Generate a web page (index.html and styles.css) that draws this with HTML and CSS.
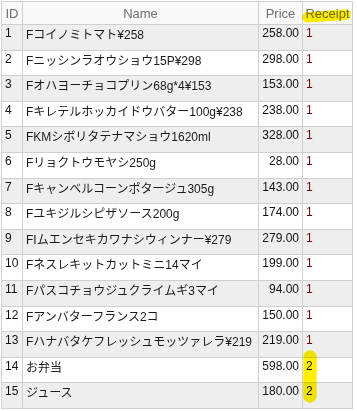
FILE: index.html
```html
<!DOCTYPE html>
<html lang="ja">
<head>
<meta charset="utf-8">
<title>Receipt items</title>
<link rel="stylesheet" href="styles.css">
</head>
<body>
<div class="wrap">
<table class="grid">
  <colgroup>
    <col class="c-id"><col class="c-name"><col class="c-price"><col class="c-rcpt">
  </colgroup>
  <thead>
    <tr><th>ID</th><th>Name</th><th>Price</th><th>Receipt</th></tr>
  </thead>
  <tbody>
    <tr><td class="id">1</td><td class="name">Fコイノミトマト¥258</td><td class="price">258.00</td><td class="rc">1</td></tr>
    <tr><td class="id">2</td><td class="name">Fニッシンラオウショウ15P¥298</td><td class="price">298.00</td><td class="rc">1</td></tr>
    <tr><td class="id">3</td><td class="name">Fオハヨーチョコプリン68g*4¥153</td><td class="price">153.00</td><td class="rc">1</td></tr>
    <tr><td class="id">4</td><td class="name">Fキレテルホッカイドウバター100g¥238</td><td class="price">238.00</td><td class="rc">1</td></tr>
    <tr><td class="id">5</td><td class="name">FKMシボリタテナマショウ1620ml</td><td class="price">328.00</td><td class="rc">1</td></tr>
    <tr><td class="id">6</td><td class="name">Fリョクトウモヤシ250g</td><td class="price">28.00</td><td class="rc">1</td></tr>
    <tr><td class="id">7</td><td class="name">Fキャンベルコーンポタージュ305g</td><td class="price">143.00</td><td class="rc">1</td></tr>
    <tr><td class="id">8</td><td class="name">Fユキジルシピザソース200g</td><td class="price">174.00</td><td class="rc">1</td></tr>
    <tr><td class="id">9</td><td class="name">FIムエンセキカワナシウィンナー¥279</td><td class="price">279.00</td><td class="rc">1</td></tr>
    <tr><td class="id">10</td><td class="name">Fネスレキットカットミニ14マイ</td><td class="price">199.00</td><td class="rc">1</td></tr>
    <tr><td class="id">11</td><td class="name">Fパスコチョウジュクライムギ3マイ</td><td class="price">94.00</td><td class="rc">1</td></tr>
    <tr><td class="id">12</td><td class="name">Fアンバターフランス2コ</td><td class="price">150.00</td><td class="rc">1</td></tr>
    <tr><td class="id">13</td><td class="name">Fハナバタケフレッシュモッツァレラ¥219</td><td class="price">219.00</td><td class="rc">1</td></tr>
    <tr><td class="id">14</td><td class="name">お弁当</td><td class="price">598.00</td><td class="rc two">2</td></tr>
    <tr><td class="id">15</td><td class="name">ジュース</td><td class="price">180.00</td><td class="rc two">2</td></tr>
  </tbody>
</table>
<svg class="marks" width="357" height="411" viewBox="0 0 357 411" aria-hidden="true">
  <path d="M307.5 17.2 L345.5 14.8" stroke="#fff000" stroke-width="10.5" stroke-linecap="round" fill="none"/>
  <path d="M310 357 C310.5 365 309.5 380 310 396" stroke="#fff000" stroke-width="13.5" stroke-linecap="round" fill="none"/>
</svg>
</div>
</body>
</html>
```
FILE: styles.css
```css
html, body {
  margin: 0;
  padding: 0;
  background: #ffffff;
}
body {
  padding: 1px 0 0 1px;
  font-family: "Liberation Sans", "Noto Sans CJK JP", sans-serif;
  font-size: 12px;
  color: #111;
}
.wrap {
  position: relative;
}
.grid {
  border-collapse: collapse;
  table-layout: fixed;
  width: 352px;
}
.c-id { width: 21px; }
.c-name { width: 236px; }
.c-price { width: 44px; }
.c-rcpt { width: 50px; }

.grid th, .grid td {
  border: 1px solid #cfcfcf;
  padding: 0 3px;
  line-height: 15px;
  white-space: nowrap;
  overflow: hidden;
  vertical-align: top;
}
.grid th {
  font-size: 13px;
  font-weight: normal;
  color: #6f6f6f;
  background: #f8f8f8;
  text-align: center;
  padding-top: 3.5px;
  padding-bottom: 3.5px;
  padding-left: 0;
  padding-right: 0;
}
.grid td {
  padding-top: 1px;
  padding-bottom: 8.6px;
}
.grid td.name {
  padding-top: 3px;
  padding-bottom: 6.6px;
  color: #1a1a1a;
}
.grid tbody tr:nth-child(odd) td {
  background: #eeeeee;
}
.grid td.id { text-align: left; }
.grid td.price { text-align: right; }
.grid td.rc { color: #6b0a0a; }
.grid td.rc.two { color: #111; }

.marks {
  position: absolute;
  left: -1px;
  top: -1px;
  pointer-events: none;
  mix-blend-mode: multiply;
}
```
